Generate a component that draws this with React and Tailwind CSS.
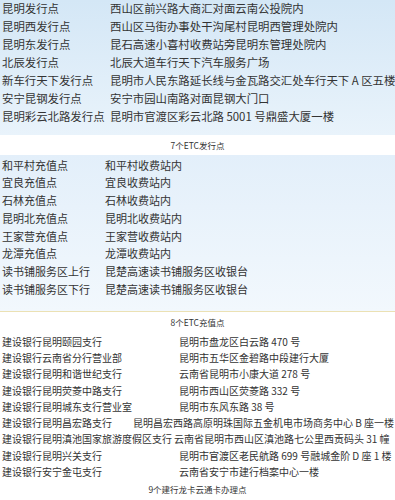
import React from 'react';

const issuePoints = [
  ['昆明发行点', '西山区前兴路大商汇对面云南公投院内'],
  ['昆明西发行点', '西山区马街办事处干沟尾村昆明西管理处院内'],
  ['昆明东发行点', '昆石高速小喜村收费站旁昆明东管理处院内'],
  ['北辰发行点', '北辰大道车行天下汽车服务广场'],
  ['新车行天下发行点', '昆明市人民东路延长线与金瓦路交汇处车行天下 A 区五楼'],
  ['安宁昆钢发行点', '安宁市园山南路对面昆钢大门口'],
  ['昆明彩云北路发行点', '昆明市官渡区彩云北路 5001 号鼎盛大厦一楼'],
];

const rechargePoints = [
  ['和平村充值点', '和平村收费站内'],
  ['宜良充值点', '宜良收费站内'],
  ['石林充值点', '石林收费站内'],
  ['昆明北充值点', '昆明北收费站内'],
  ['王家营充值点', '王家营收费站内'],
  ['龙潭充值点', '龙潭收费站内'],
  ['读书铺服务区上行', '昆楚高速读书铺服务区收银台'],
  ['读书铺服务区下行', '昆楚高速读书铺服务区收银台'],
];

const bankPoints = [
  ['建设银行昆明颐园支行', '昆明市盘龙区白云路 470 号', 'w-[177px]'],
  ['建设银行云南省分行营业部', '昆明市五华区金碧路中段建行大厦', 'w-[177px]'],
  ['建设银行昆明和谐世纪支行', '云南省昆明市小康大道 278 号', 'w-[177px]'],
  ['建设银行昆明荧菱中路支行', '昆明市西山区荧菱路 332 号', 'w-[177px]'],
  ['建设银行昆明城东支行营业室', '昆明市东风东路 38 号', 'w-[177px]'],
  ['建设银行昆明昌宏路支行', '昆明昌宏西路高原明珠国际五金机电市场商务中心 B 座一楼', 'w-[131px]'],
  ['建设银行昆明滇池国家旅游度假区支行', '云南省昆明市西山区滇池路七公里西贡码头 31 幢', 'w-[172px]'],
  ['建设银行昆明兴关支行', '昆明市官渡区老民航路 699 号融城金阶 D 座 1 楼', 'w-[177px]'],
  ['建设银行安宁金屯支行', '云南省安宁市建行档案中心一楼', 'w-[177px]'],
];

const Caption = ({ children, className }) => (
  <div className={`flex items-center justify-center text-[8.5px] text-[#333] bg-white ${className}`}>
    {children}
  </div>
);

export default function App() {
  return (
    <div
      className="w-[395px] h-[500px] overflow-hidden bg-white text-[#333] whitespace-nowrap"
      style={{ fontFamily: '"Noto Sans CJK SC", "Noto Sans", sans-serif' }}
    >
      <div className="bg-gradient-to-b from-[#d4e7f6] to-[#e9f3fb] pb-[9px] text-[11.4px]">
        {issuePoints.map(([name, addr]) => (
          <div key={name} className="flex items-center h-[18px] pl-[2px]">
            <span className="w-[108px] shrink-0">{name}</span>
            <span>{addr}</span>
          </div>
        ))}
      </div>

      <Caption className="h-[20px]">7个ETC发行点</Caption>

      <div className="bg-gradient-to-b from-[#e3effa] to-[#f2f8fd] pt-[1px] pb-[13px] text-[11px] border-b border-[#ebe1b4]">
        {rechargePoints.map(([name, addr], i) => (
          <div key={i} className="flex items-center h-[17.75px] pl-[2px]">
            <span className="w-[103px] shrink-0">{name}</span>
            <span>{addr}</span>
          </div>
        ))}
      </div>

      <Caption className="h-[21px]">8个ETC充值点</Caption>

      <div className="text-[10px]">
        {bankPoints.map(([name, addr, w]) => (
          <div key={name} className="flex items-center h-[16.3px] pl-[2px]">
            <span className={`${w} shrink-0`}>{name}</span>
            <span>{addr}</span>
          </div>
        ))}
      </div>

      <Caption className="h-[19px]">9个建行龙卡云通卡办理点</Caption>
    </div>
  );
}
